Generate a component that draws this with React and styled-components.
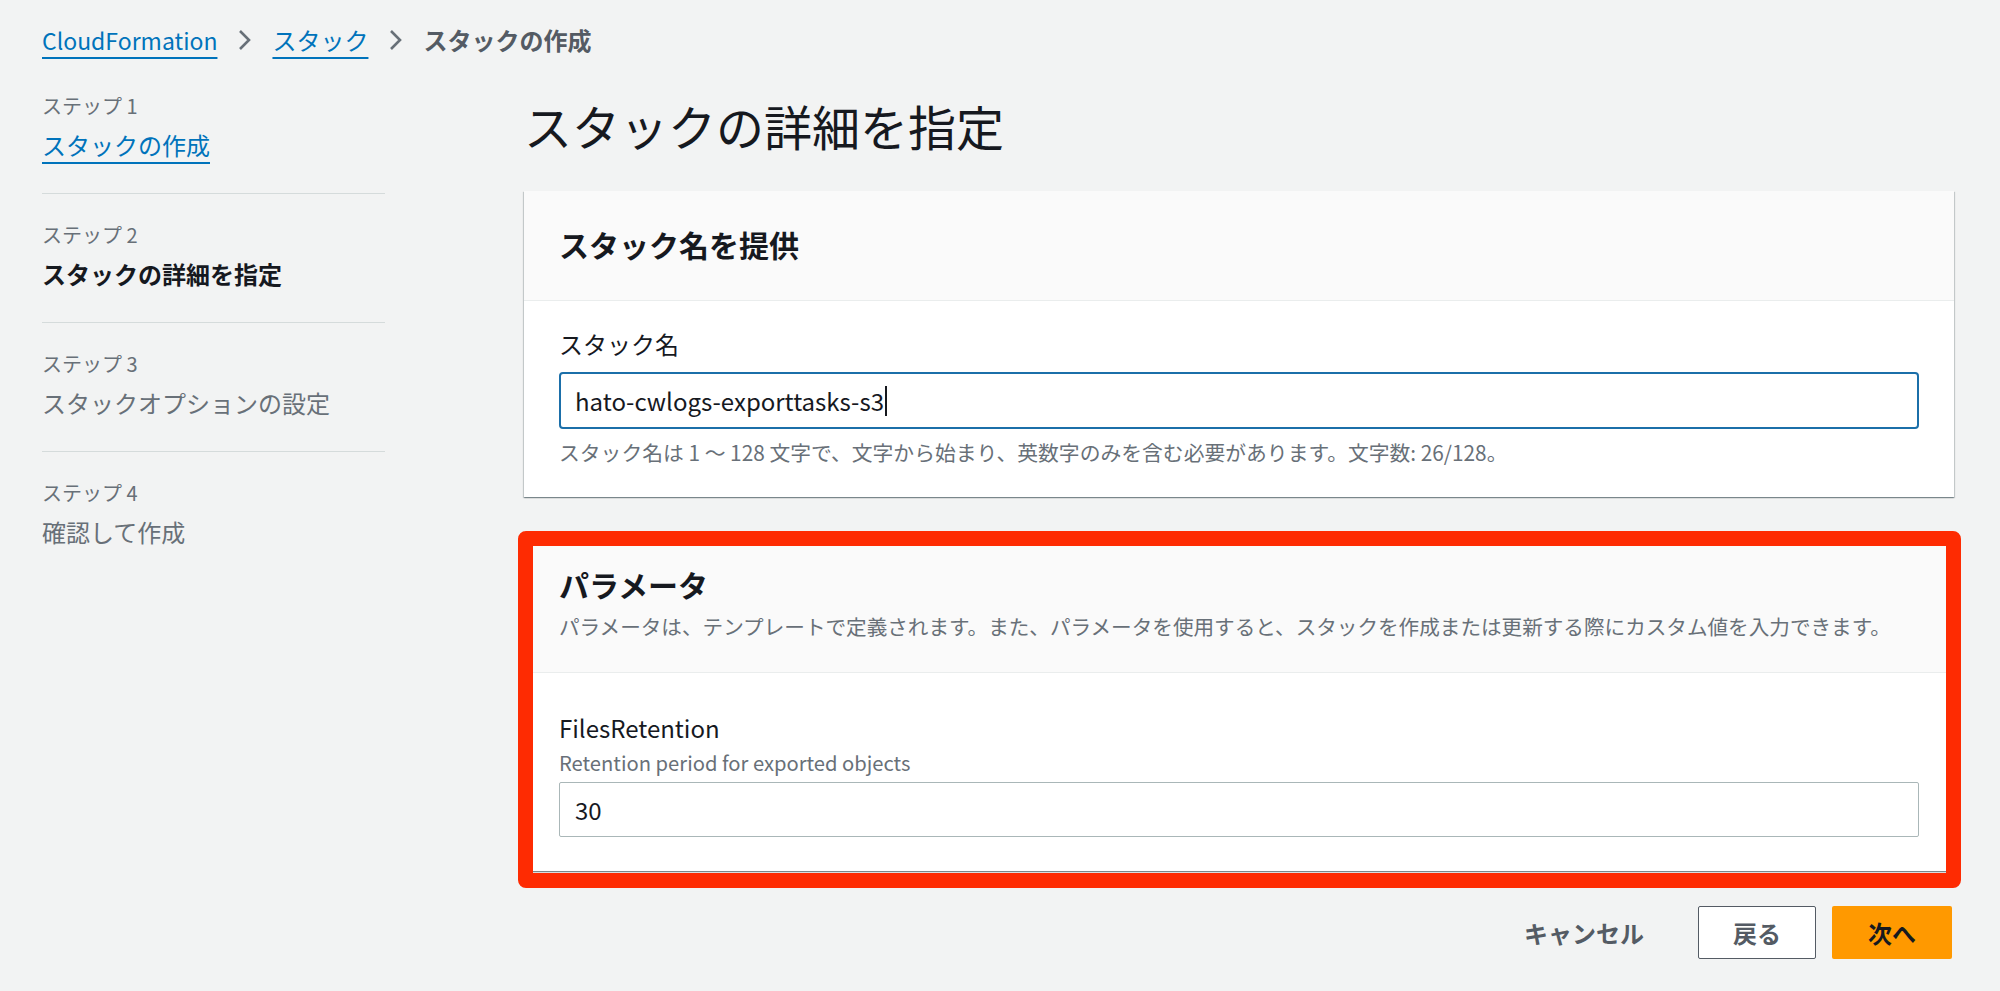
import styled, { createGlobalStyle } from "styled-components";

const GlobalStyle = createGlobalStyle`
  html, body {
    margin: 0;
    padding: 0;
    background: #f2f3f3;
  }
  body {
    font-family: "Noto Sans CJK JP", "Liberation Sans", sans-serif;
    color: #16191f;
  }
`;

const Page = styled.div`
  min-height: 991px;
  padding: 24px 46px 0 42px;
  box-sizing: border-box;
`;

const Breadcrumbs = styled.nav`
  display: flex;
  align-items: center;
  height: 32px;
  font-size: 24px;
  line-height: 32px;
`;

const Crumb = styled.a`
  color: #0073bb;
  font-size: ${(p) => p.$size || 24}px;
  text-decoration: underline;
  text-decoration-thickness: 2px;
  text-underline-offset: 7px;
  cursor: pointer;
`;

const CurrentCrumb = styled.span`
  color: #545b64;
  font-weight: 700;
`;

const Sep = styled.span`
  display: flex;
  align-items: center;
  margin: 0 21px;
  color: #687078;
`;

const Layout = styled.div`
  display: grid;
  grid-template-columns: 343px 1fr;
  column-gap: 139px;
  margin-top: 9px;
`;

const StepList = styled.ol`
  list-style: none;
  margin: 0;
  padding: 0;
`;

const Step = styled.li`
  padding: 26px 0 28px;
  border-bottom: ${(p) => (p.$last ? "none" : "1px solid #d5dbdb")};
`;

const StepLabel = styled.div`
  font-size: 20px;
  line-height: 30px;
  color: #687078;
  margin-bottom: 4px;
`;

const StepTitle = styled.div`
  font-size: 24px;
  line-height: 40px;
  color: ${(p) => (p.$active ? "#16191f" : "#687078")};
  font-weight: ${(p) => (p.$active ? 700 : 400)};
`;

const StepLink = styled.a`
  color: #0073bb;
  text-decoration: underline;
  text-decoration-thickness: 2px;
  text-underline-offset: 7px;
  cursor: pointer;
`;

const Main = styled.main`
  display: flex;
  flex-direction: column;
`;

const PageTitle = styled.h1`
  margin: 30px 0 36px;
  font-size: 48px;
  line-height: 60px;
  font-weight: 400;
  color: #16191f;
`;

const Card = styled.section`
  background: #fff;
  box-shadow: 0 1px 1px 0 rgba(0, 28, 36, 0.3), 1px 1px 1px 0 rgba(0, 28, 36, 0.15),
    -1px 1px 1px 0 rgba(0, 28, 36, 0.15);
`;

const CardHeader = styled.header`
  background: #fafafa;
  border-bottom: 1px solid #eaeded;
  padding: 33px 35px ${(p) => p.$pb || 36}px;
`;

const CardTitle = styled.h2`
  margin: 0;
  font-size: 30px;
  line-height: 40px;
  font-weight: 700;
`;

const CardDesc = styled.p`
  margin: 8px 0 0;
  font-size: 20.6px;
  line-height: 28px;
  color: #687078;
`;

const CardBody = styled.div`
  padding: ${(p) => p.$pt}px 35px ${(p) => p.$pb}px 35px;
`;

const FieldLabel = styled.div`
  font-size: 24px;
  line-height: 32px;
  color: #16191f;
`;

const FieldHint = styled.div`
  font-size: 20.2px;
  line-height: 28px;
  color: #687078;
  margin-top: 5px;
`;

const FieldHelp = styled.div`
  font-size: 20.8px;
  line-height: 28px;
  color: #687078;
  margin-top: 9px;
`;

const TextBox = styled.div`
  display: flex;
  align-items: center;
  box-sizing: border-box;
  height: ${(p) => (p.$focused ? 57 : 55)}px;
  margin-top: ${(p) => (p.$focused ? 12 : 5)}px;
  padding: 0 ${(p) => (p.$focused ? 14 : 15)}px;
  background: #fff;
  border: ${(p) => (p.$focused ? "2px solid #1b6fa9" : "1px solid #aab7b8")};
  border-radius: ${(p) => (p.$focused ? 4 : 2)}px;
  font-size: 24px;
  color: #16191f;
`;

const Caret = styled.span`
  display: inline-block;
  width: 2px;
  height: 30px;
  margin-left: 1px;
  background: #16191f;
`;

const Highlighted = styled.div`
  position: relative;
  margin-top: 34px;
`;

const RedFrame = styled.div`
  position: absolute;
  top: 0;
  left: -6px;
  right: -7px;
  bottom: -17px;
  border: 15px solid #fe2b02;
  border-radius: 8px;
  pointer-events: none;
`;

const Actions = styled.div`
  display: flex;
  justify-content: flex-end;
  gap: 16px;
  margin-top: 35px;
  margin-right: 2px;
`;

const Button = styled.button`
  height: 53px;
  min-width: ${(p) => (p.$variant === "link" ? 0 : 118)}px;
  padding: 0 ${(p) => (p.$variant === "link" ? 37 : 20)}px;
  font-family: inherit;
  font-size: 24px;
  font-weight: 700;
  border-radius: 2px;
  cursor: pointer;
  border: ${(p) =>
    p.$variant === "normal" ? "1px solid #545b64" : "1px solid transparent"};
  background: ${(p) =>
    p.$variant === "primary" ? "#ff9900" : p.$variant === "normal" ? "#fff" : "transparent"};
  color: ${(p) => (p.$variant === "primary" ? "#16191f" : "#545b64")};
  ${(p) => p.$variant === "primary" && "min-width: 120px;"}
`;

function Chevron() {
  return (
    <svg width="13" height="22" viewBox="0 0 13 22" fill="none">
      <path d="M2 2 L11 11 L2 20" stroke="#687078" strokeWidth="2.6" />
    </svg>
  );
}

const steps = [
  { label: "ステップ 1", title: "スタックの作成", link: true },
  { label: "ステップ 2", title: "スタックの詳細を指定", active: true },
  { label: "ステップ 3", title: "スタックオプションの設定" },
  { label: "ステップ 4", title: "確認して作成" },
];

export default function App() {
  return (
    <>
      <GlobalStyle />
      <Page>
        <Breadcrumbs>
          <Crumb $size={23}>CloudFormation</Crumb>
          <Sep>
            <Chevron />
          </Sep>
          <Crumb>スタック</Crumb>
          <Sep>
            <Chevron />
          </Sep>
          <CurrentCrumb>スタックの作成</CurrentCrumb>
        </Breadcrumbs>

        <Layout>
          <StepList>
            {steps.map((s, i) => (
              <Step key={s.label} $last={i === steps.length - 1}>
                <StepLabel>{s.label}</StepLabel>
                <StepTitle $active={s.active}>
                  {s.link ? <StepLink>{s.title}</StepLink> : s.title}
                </StepTitle>
              </Step>
            ))}
          </StepList>

          <Main>
            <PageTitle>スタックの詳細を指定</PageTitle>

            <Card>
              <CardHeader $pb={36}>
                <CardTitle>スタック名を提供</CardTitle>
              </CardHeader>
              <CardBody $pt={27} $pb={31}>
                <FieldLabel>スタック名</FieldLabel>
                <TextBox $focused>
                  hato-cwlogs-exporttasks-s3
                  <Caret />
                </TextBox>
                <FieldHelp>
                  スタック名は 1 〜 128 文字で、文字から始まり、英数字のみを含む必要があります。文字数: 26/128。
                </FieldHelp>
              </CardBody>
            </Card>

            <Highlighted>
              <Card>
                <CardHeader $pb={32}>
                  <CardTitle>パラメータ</CardTitle>
                  <CardDesc>
                    パラメータは、テンプレートで定義されます。また、パラメータを使用すると、スタックを作成または更新する際にカスタム値を入力できます。
                  </CardDesc>
                </CardHeader>
                <CardBody $pt={39} $pb={34}>
                  <FieldLabel>FilesRetention</FieldLabel>
                  <FieldHint>Retention period for exported objects</FieldHint>
                  <TextBox>30</TextBox>
                </CardBody>
              </Card>
              <RedFrame />
            </Highlighted>

            <Actions>
              <Button $variant="link">キャンセル</Button>
              <Button $variant="normal">戻る</Button>
              <Button $variant="primary">次へ</Button>
            </Actions>
          </Main>
        </Layout>
      </Page>
    </>
  );
}
